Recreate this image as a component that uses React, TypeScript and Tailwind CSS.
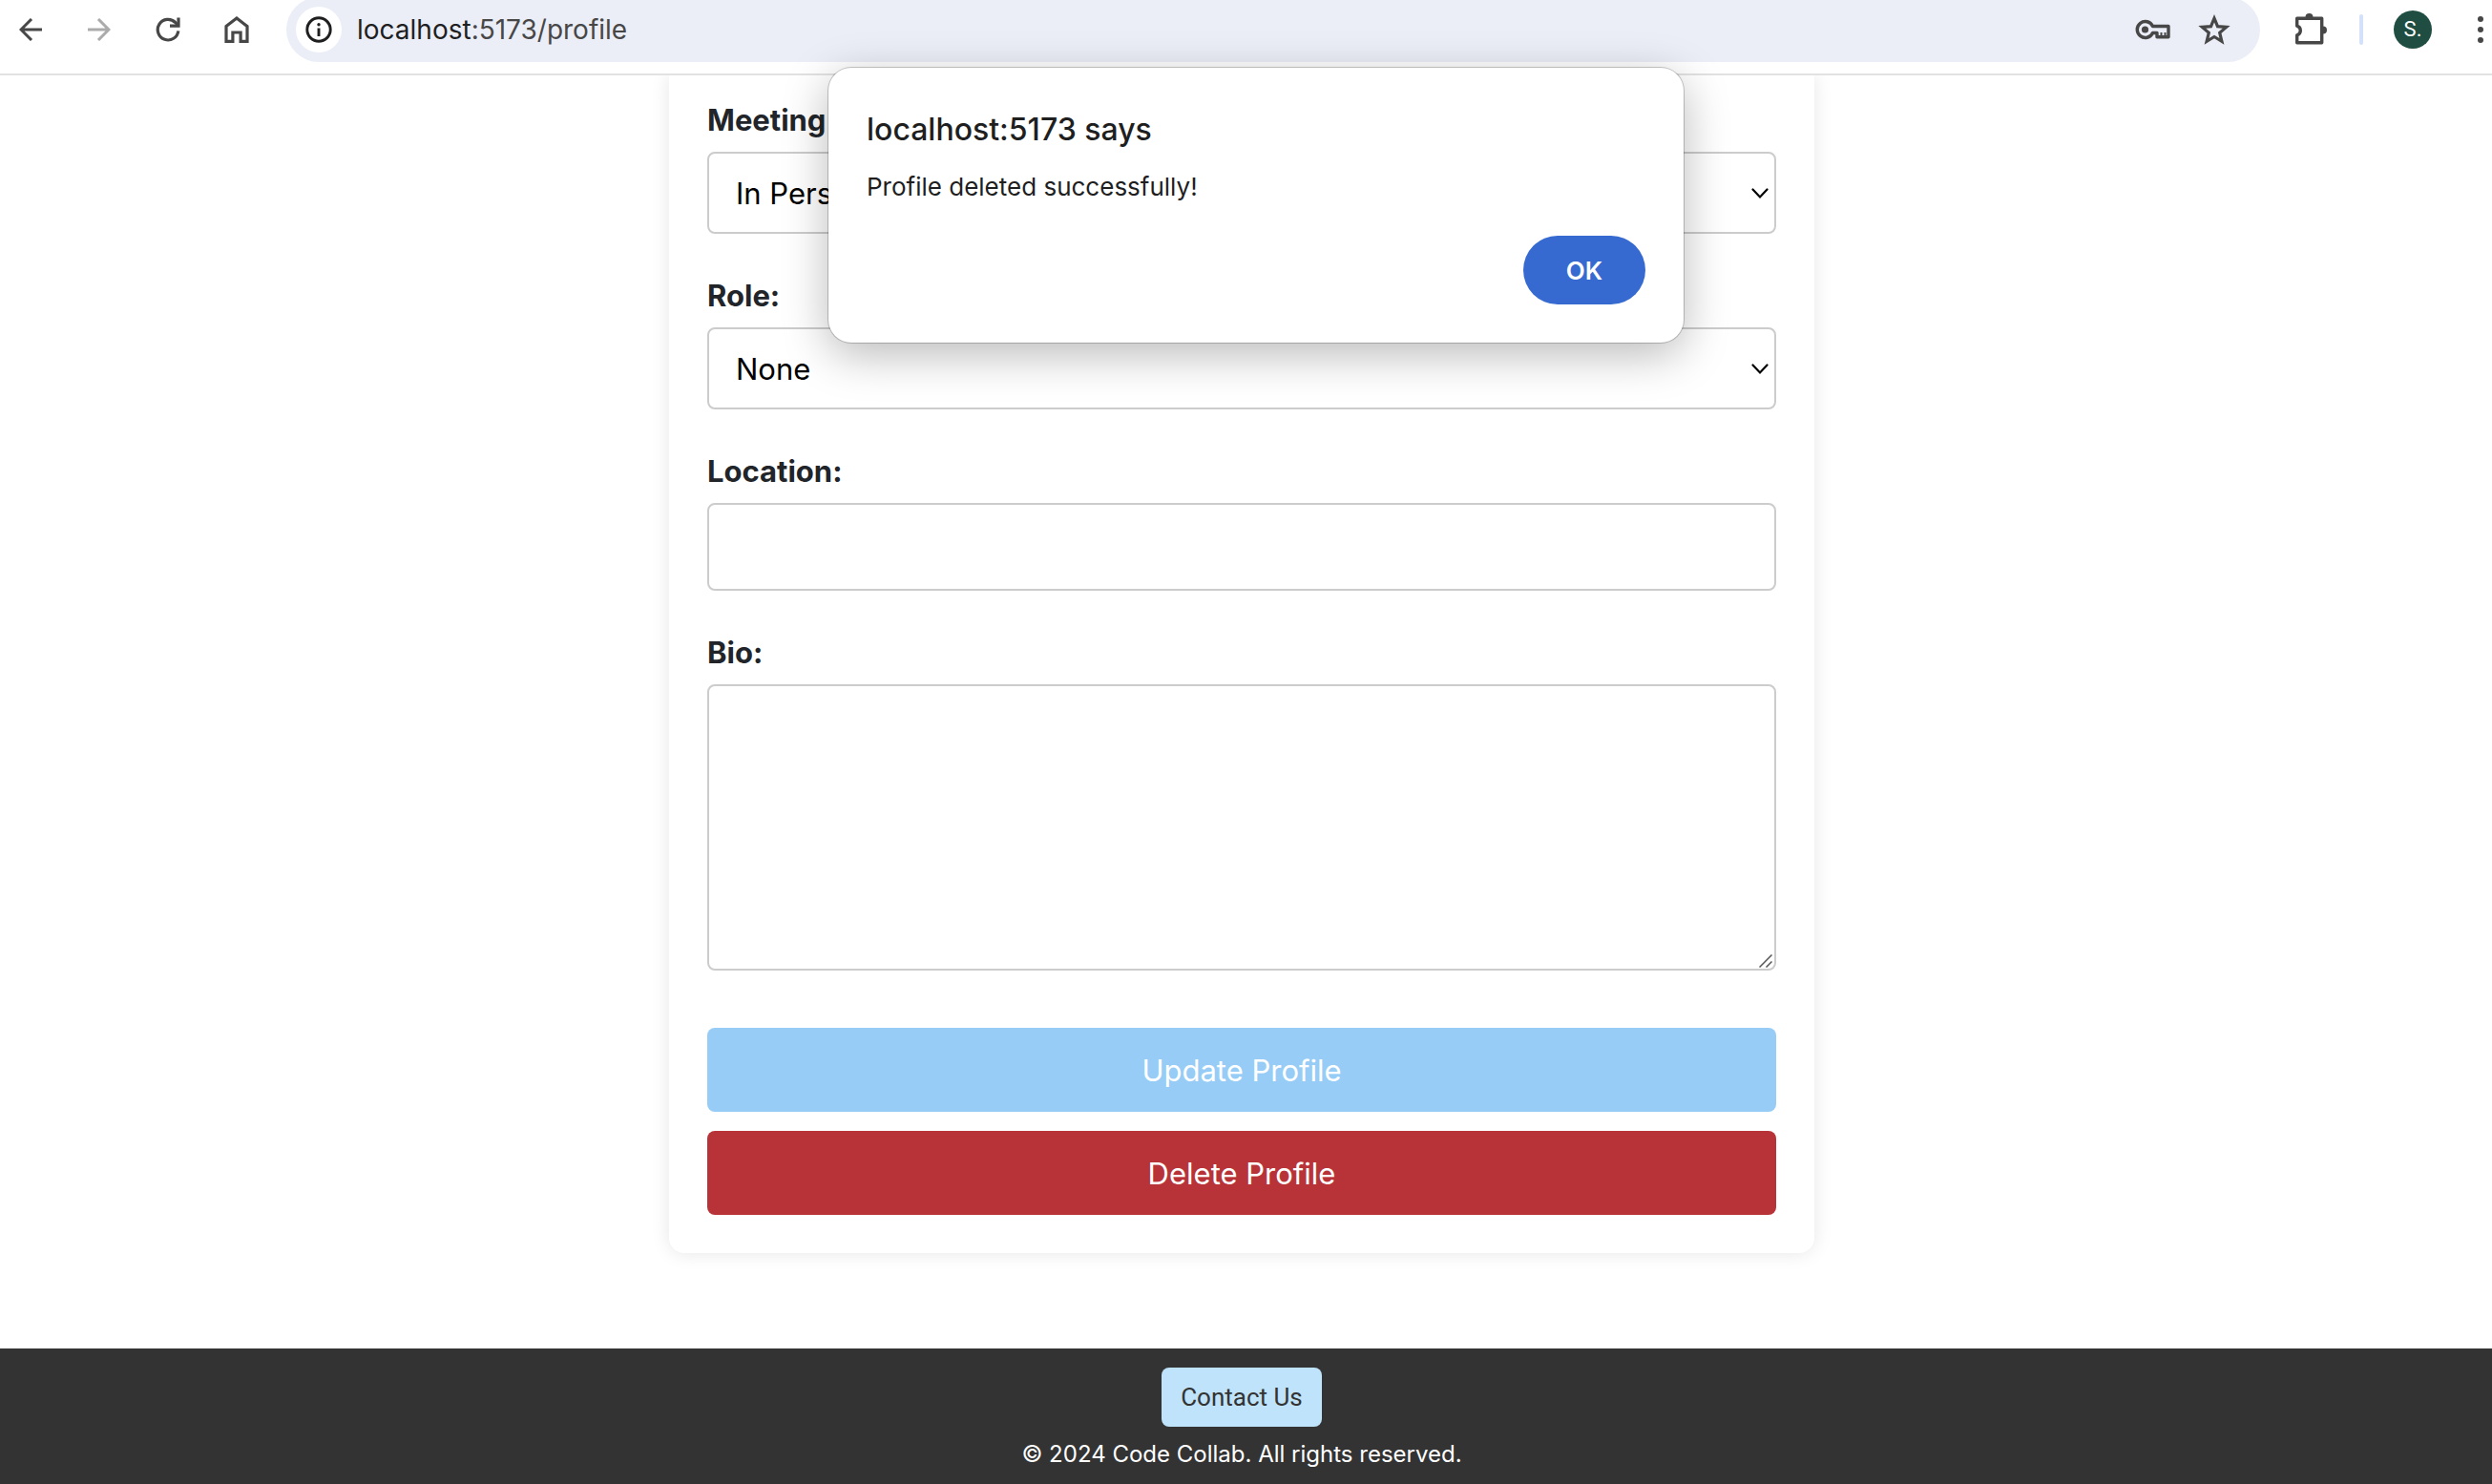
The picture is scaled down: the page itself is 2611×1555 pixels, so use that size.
import type { ReactNode } from "react";

function IconButton({ label, children }: { label: string; children: ReactNode }) {
  return (
    <button type="button" aria-label={label} className="flex size-10 shrink-0 items-center justify-center text-[#474747]">
      {children}
    </button>
  );
}

function Toolbar() {
  return (
    <header className="relative flex h-[79px] items-start border-b-2 border-[#e2e2e2] bg-white pl-3 pr-0">
      <nav aria-label="Browser" className="flex h-[62px] items-center gap-8">
        <IconButton label="Back">
          <svg viewBox="0 0 24 24" className="size-6" fill="none" stroke="currentColor" strokeWidth="3">
            <path d="M24 12H2.5M13 1 2 12l11 11" />
          </svg>
        </IconButton>
        <IconButton label="Forward">
          <svg viewBox="0 0 24 24" className="size-6 text-[#ababab]" fill="none" stroke="currentColor" strokeWidth="3">
            <path d="M0 12h21.500M11 1l11 11-11 11" />
          </svg>
        </IconButton>
        <IconButton label="Reload">
          <svg viewBox="0 0 26 26" className="size-[26px]" fill="none" stroke="currentColor" strokeWidth="3.200">
            <path d="M23.800 14.300A10.800 10.800 0 1 1 20.700 5.500L24 9" />
            <path d="M24 .5v8.700H15" />
          </svg>
        </IconButton>
        <IconButton label="Home">
          <svg viewBox="0 0 26 28" className="h-7 w-[26px]" fill="none" stroke="currentColor" strokeWidth="3.200">
            <path d="M2 10.500 13 2.100l11 8.400v15.900h-6.900V17H8.900v9.400H2z" />
          </svg>
        </IconButton>
      </nav>
      <div className="ml-8 mr-[17px] -mt-[3px] flex h-[68px] flex-1 items-center rounded-full bg-[#ebeef7] pl-[10px] pr-7">
        <button type="button" aria-label="View site information" className="flex size-12 items-center justify-center rounded-full bg-white text-[#1f1f1f]">
          <svg viewBox="0 0 28 28" className="size-7" fill="none" stroke="currentColor" strokeWidth="2.900">
            <circle cx="14" cy="14" r="12.200" />
            <path d="M14 12.500V21" />
            <circle cx="14" cy="8.800" r="1.700" fill="currentColor" stroke="none" />
          </svg>
        </button>
        <p className="ml-4 flex-1 text-[28px] leading-10 text-[#474747]">
          <span className="text-[#1f1f1f]">localhost</span>:5173/profile
        </p>
        <div className="flex gap-6">
          <IconButton label="Passwords">
            <svg viewBox="0 0 38 22" className="h-[22px] w-[38px]" fill="none" stroke="currentColor" strokeWidth="3.400" strokeLinejoin="round">
              <path d="M18.500 7.500A8.500 8.500 0 1 0 18.500 14.500H23v4.300h12V7.500z" />
              <circle cx="10.500" cy="11" r="3.600" fill="currentColor" stroke="none" />
              <path d="M27.500 18v-4M31.500 18v-4" strokeWidth="2" />
            </svg>
          </IconButton>
          <IconButton label="Bookmark">
            <svg viewBox="0 0 34 32" className="h-8 w-[34px]" fill="none" stroke="currentColor" strokeWidth="3.200">
              <path d="m17 4.200 3.500 8.500 9.200.7-7 6 2.200 8.900L17 23.500l-7.900 4.800 2.200-8.900-7-6 9.200-.7z" />
            </svg>
          </IconButton>
        </div>
      </div>
      <div className="flex h-[62px] items-center pl-4">
        <IconButton label="Extensions">
          <svg viewBox="0 0 34 34" className="size-[34px]" fill="none" stroke="currentColor" strokeWidth="3.400" strokeLinejoin="round">
            <path d="M2.700 5.200h26v25.600h-26v-8a5 5 0 0 0 0-9.600z" />
            <path d="M11.500 4a4 4 0 0 1 8 0zM30 13.500a4 4 0 0 1 0 8z" fill="currentColor" stroke="none" />
          </svg>
        </IconButton>
        <span className="ml-[31px] h-8 w-1 rounded-full bg-[#d3e1fb]" />
        <button type="button" aria-label="Account" className="ml-8 flex size-10 items-center justify-center rounded-full bg-[#1f4d42] font-['Roboto'] text-[22px] leading-none text-white">
          S.
        </button>
        <button type="button" aria-label="More" className="ml-12 flex w-[15px] flex-col gap-[5px]">
          <span className="size-[6px] rounded-full bg-[#474747]" />
          <span className="size-[6px] rounded-full bg-[#474747]" />
          <span className="size-[6px] rounded-full bg-[#474747]" />
        </button>
      </div>
    </header>
  );
}

const labelClass = "mb-[9px] block text-[31px] font-bold leading-[48px] text-[#212529]";
const fieldClass = "block w-full rounded-lg border-2 border-[#ccc] bg-white text-[31px] text-black outline-none";

function SelectField({ id, label, value }: { id: string; label: string; value: string }) {
  return (
    <div className="mb-[41px]">
      <label htmlFor={id} className={labelClass}>{label}</label>
      <div className="relative">
        <select id={id} defaultValue={value} className={`${fieldClass} h-[86px] appearance-none px-7 pt-[2px]`}>
          <option>{value}</option>
        </select>
        <svg viewBox="0 0 18 12" className="pointer-events-none absolute right-2 top-[38px] h-3 w-[18px]" fill="none" stroke="#000" strokeWidth="2.200" strokeLinecap="round">
          <path d="m1.500 1.500 7.500 8 7.500-8" />
        </svg>
      </div>
    </div>
  );
}

export default function App() {
  return (
    <div className="relative flex min-h-screen flex-col bg-white font-['Inter','Liberation_Sans',sans-serif]">
      <Toolbar />
      <div className="overflow-hidden pr-[9px]">
        <main className="mx-auto mb-[100px] w-full max-w-[1200px] rounded-b-2xl bg-white px-10 pb-10 pt-[23px] shadow-[0_0_20px_rgba(0,0,0,0.1)]">
          <form onSubmit={(e) => e.preventDefault()}>
            <SelectField id="meeting" label="Meeting" value="In Person" />
            <SelectField id="role" label="Role:" value="None" />
            <div className="mb-[41px]">
              <label htmlFor="location" className={labelClass}>Location:</label>
              <input id="location" type="text" className={`${fieldClass} h-[92px] px-5`} />
            </div>
            <div className="mb-[60px]">
              <label htmlFor="bio" className={labelClass}>Bio:</label>
              <div className="relative">
                <textarea id="bio" className={`${fieldClass} h-[300px] resize-none p-5`} />
                <svg viewBox="0 0 14 14" className="pointer-events-none absolute bottom-[3px] right-1 size-[14px]" stroke="#555" strokeWidth="1.500">
                  <path d="M.5 13.500l13-13M7.500 13.500l6-6" />
                </svg>
              </div>
            </div>
            <div className="flex flex-col gap-5">
              <button type="submit" className="h-[88px] rounded-lg bg-[#96ccf6] pt-[2px] text-[31px] text-white">Update Profile</button>
              <button type="button" className="h-[88px] rounded-lg bg-[#b83338] pt-[2px] text-[31px] text-white">Delete Profile</button>
            </div>
          </form>
        </main>
      </div>
      <footer className="flex flex-1 flex-col items-center bg-[#333] pb-[11px] pr-[9px] pt-5 text-white">
        <a href="#contact" className="flex h-[62px] items-center rounded-lg bg-[#bee3fa] px-5 font-['Roboto'] text-[26px] text-[#333]">Contact Us</a>
        <p className="mt-[9px] text-[24px] leading-10">© 2024 Code Collab. All rights reserved.</p>
      </footer>
      <div className="absolute inset-x-0 top-[71px] flex justify-center pl-[21px]">
        <div role="alertdialog" aria-labelledby="alert-title" aria-describedby="alert-text" className="w-[896px] rounded-3xl bg-white px-10 pb-10 pt-[41px] shadow-[0_0_0_1px_rgba(0,0,0,0.2),0_12px_48px_rgba(0,0,0,0.28)]">
          <h1 id="alert-title" className="text-[32px] font-medium leading-12 text-[#1f1f1f]">localhost:5173 says</h1>
          <p id="alert-text" className="mt-4 text-[26px] leading-10 text-[#1f1f1f]">Profile deleted successfully!</p>
          <div className="mt-[31px] flex justify-end">
            <button type="button" className="h-[72px] w-32 rounded-full bg-[#366ad0] text-[26px] font-semibold text-white">OK</button>
          </div>
        </div>
      </div>
    </div>
  );
}
